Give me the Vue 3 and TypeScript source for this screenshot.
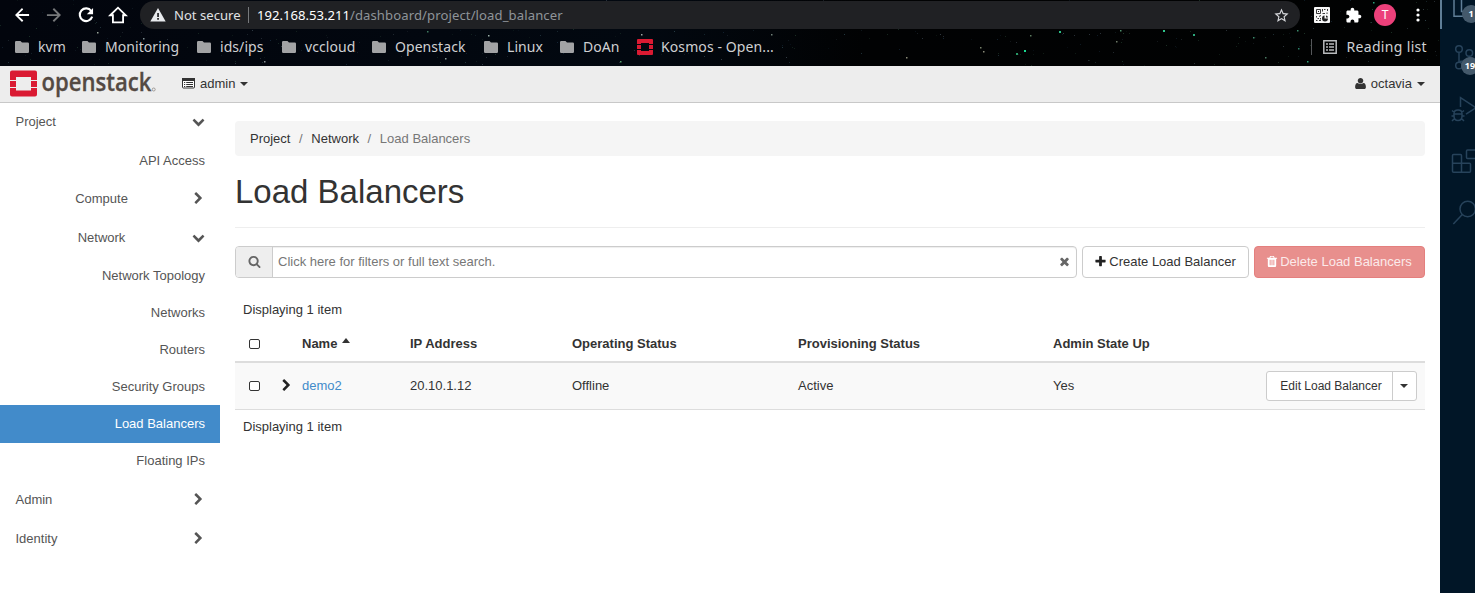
<script setup lang="ts">
interface NavItem { label: string; kind: 'top' | 'api' | 'group' | 'leaf'; open?: boolean; active?: boolean }

const bookmarks: string[] = ['kvm', 'Monitoring', 'ids/ips', 'vccloud', 'Openstack', 'Linux', 'DoAn']

const nav: NavItem[] = [
  { label: 'Project', kind: 'top', open: true },
  { label: 'API Access', kind: 'api' },
  { label: 'Compute', kind: 'group' },
  { label: 'Network', kind: 'group', open: true },
  { label: 'Network Topology', kind: 'leaf' },
  { label: 'Networks', kind: 'leaf' },
  { label: 'Routers', kind: 'leaf' },
  { label: 'Security Groups', kind: 'leaf' },
  { label: 'Load Balancers', kind: 'leaf', active: true },
  { label: 'Floating IPs', kind: 'leaf' },
  { label: 'Admin', kind: 'top' },
  { label: 'Identity', kind: 'top' },
]

const headers: string[] = ['IP Address', 'Operating Status', 'Provisioning Status', 'Admin State Up']
const cells: string[] = ['20.10.1.12', 'Offline', 'Active', 'Yes']

const chevronDown = 'M1683 808l-742 741q-19 19-45 19t-45-19l-742-741q-19-19-19-45.500t19-45.500l166-165q19-19 45-19t45 19l531 531 531-531q19-19 45-19t45 19l166 165q19 19 19 45.500t-19 45.500z'
const chevronRight = 'M1363 877l-742 742q-19 19-45 19t-45-19l-166-166q-19-19-19-45t19-45l531-531-531-531q-19-19-19-45t19-45l166-166q19-19 45-19t45 19l742 742q19 19 19 45t-19 45z'

// Starfield: a fixed pseudo-random scatter plus a few bright stars.
const tints: string[] = ['#34505a', '#2b4a38', '#46525c', '#1d3346', '#203a2c']
let seed = 41
const rand = (): number => {
  seed = (seed * 16807) % 2147483647
  return seed / 2147483647
}
const dust = Array.from({ length: 420 }, () => ({
  x: Math.floor(rand() * 1440),
  y: Math.floor(rand() * 66),
  c: tints[Math.floor(rand() * tints.length)],
  o: 0.2 + rand() * 0.5,
}))
const stars: [number, number, string][] = [
  [1024, 50, '#18d890'], [1059, 31, '#2bbf86'], [1016, 53, '#2a9a68'], [1163, 30, '#2fc48b'], [1193, 34, '#2ca77c'],
  [1120, 30, '#4e8f6c'], [1030, 35, '#5c7a60'], [980, 47, '#77806a'], [983, 51, '#8a8a78'], [906, 57, '#8a8a78'],
  [1116, 41, '#6e7a68'], [641, 34, '#9aa8a4'], [488, 35, '#9ab0a8'], [445, 58, '#8a9c98'], [620, 61, '#59a06c'],
  [97, 32, '#98a498'], [143, 38, '#7c8c90'], [264, 61, '#8b9496'], [427, 31, '#3f7a60'], [771, 34, '#708078'],
  [1298, 48, '#2b8069'], [1307, 61, '#2ba079'], [1373, 2, '#2ba079'], [1297, 30, '#3b8a6b'], [1253, 37, '#3b8a6b'], [1265, 57, '#4a7a62'],
]
</script>

<template>
  <div class="screen">
    <div class="browser">
      <div class="chrome">
        <svg class="sky" width="1440" height="66" viewBox="0 0 1440 66">
          <defs>
            <linearGradient id="night" x1="0" x2="1" y1="0" y2="0">
              <stop offset="0" stop-color="#02050d" /><stop offset=".45" stop-color="#020810" />
              <stop offset=".6" stop-color="#010203" /><stop offset="1" stop-color="#010202" />
            </linearGradient>
          </defs>
          <rect width="1440" height="66" fill="url(#night)" />
          <rect v-for="(d, i) in dust" :key="i" :x="d.x" :y="d.y" width="1" height="1" :fill="d.c" :opacity="d.o" />
          <rect v-for="(s, i) in stars" :key="'s' + i" :x="s[0]" :y="s[1]" :width="i < 5 ? 2 : 1.500" :height="i < 5 ? 2 : 1.500" :fill="s[2]" />
        </svg>
        <div class="toolbar">
          <svg class="tb-back" width="20" height="20" viewBox="0 0 24 24" fill="#fff"><path d="M20.500 10.800H7.830l5.590-5.390L12 3.600 3.600 12l8.400 8.400 1.600-1.800L7.830 13.200H20.500z" /></svg>
          <svg class="tb-fwd" width="20" height="20" viewBox="0 0 24 24" fill="#77797b"><path d="M12 3.600l-1.600 1.800L16.170 11H3.500v2.200h12.670l-5.770 5.400L12 20.400l8.400-8.400z" /></svg>
          <svg class="tb-reload" width="20" height="20" viewBox="0 0 24 24" fill="none" stroke="#fff" stroke-width="2.500"><path d="M18.300 7.200A7.600 7.600 0 1 0 19.400 14" /><path d="M20.500 3.500v7.500H13z" fill="#fff" stroke="none" /></svg>
          <svg class="tb-home" width="20" height="20" viewBox="0 0 24 24" fill="none" stroke="#fff" stroke-width="2.200"><path d="M2.700 12.300L12 3.200l9.300 9.100h-3.200v8.500H5.900v-8.500z" /></svg>
          <div class="omnibox">
            <svg width="16" height="14" viewBox="0 0 16 14"><path d="M8 0l7.700 13.500H.3z" fill="#e8eaed" /><path d="M7.200 5h1.700v4H7.200zM7.200 10h1.700v1.700H7.200z" fill="#202124" /></svg>
            <span class="insecure">Not secure</span>
            <i class="sep"></i>
            <span class="url"><b>192.168.53.211</b>/dashboard/project/load_balancer</span>
            <svg class="star" width="17" height="17" viewBox="0 0 24 24" fill="#d5d7da"><path d="M22 9.240l-7.190-.620L12 2 9.190 8.630 2 9.240l5.460 4.730L5.820 21 12 17.270 18.180 21l-1.630-7.030L22 9.240zM12 15.400l-3.760 2.270 1-4.280-3.320-2.880 4.380-.380L12 6.100l1.710 4.040 4.380.380-3.320 2.880 1 4.280L12 15.400z" /></svg>
          </div>
          <svg class="qr" width="16" height="16" viewBox="0 0 16 16">
            <rect width="16" height="16" rx="1" fill="#f8f8f8" />
            <g fill="none" stroke="#222" stroke-width=".9"><path d="M2.500 2.500h4v4h-4zM8.500 2v2.500M10 2.500h1.500M13.500 2v2M8.500 6.500H11M13 5.500v1.500M2.500 9v1.500M5 9.500l2-1M2 13.500h1.500M5 13.500h2M6.500 11v1.500M3.500 11.500h1.500" /></g>
            <path d="M4 4h1v1H4zM10.500 8.500v3h3.500q0 3-3 3t-3-3 2.500-3zM12 8.500q1.800 0 2 2h-2z" fill="#222" />
          </svg>
          <svg class="ext" width="17" height="17" viewBox="0 0 24 24" fill="#fff"><path d="M20.500 11H19V7c0-1.100-.9-2-2-2h-4V3.500C13 2.120 11.880 1 10.500 1S8 2.120 8 3.500V5H4c-1.100 0-1.990.9-1.990 2v3.800H3.500c1.490 0 2.700 1.210 2.700 2.700s-1.210 2.700-2.700 2.700H2V20c0 1.100.9 2 2 2h3.800v-1.500c0-1.490 1.210-2.700 2.700-2.700 1.490 0 2.700 1.210 2.700 2.700V22H17c1.100 0 2-.9 2-2v-4h1.500c1.380 0 2.500-1.120 2.500-2.500S21.880 11 20.500 11z" /></svg>
          <span class="avatar">T</span>
          <svg class="more" width="4" height="14" viewBox="0 0 4 14" fill="#fff"><circle cx="2" cy="2" r="1.600" /><circle cx="2" cy="7" r="1.600" /><circle cx="2" cy="12" r="1.600" /></svg>
        </div>
        <div class="bookmarks">
          <div v-for="b in bookmarks" :key="b" class="bm">
            <svg width="14" height="12" viewBox="0 0 14 12" fill="#a2a3a5"><path d="M1.200 0h4.300l1.500 1.600h5.800Q14 1.600 14 2.800v8q0 1.200-1.200 1.200H1.200Q0 12 0 10.800V1.200Q0 0 1.200 0z" /></svg>
            <span>{{ b }}</span>
          </div>
          <div class="bm kosmos">
            <svg width="16" height="16" viewBox="0 0 16 16"><path fill="#da1a32" d="M1 0h14q1 0 1 1v4h-4V4H4v1H0V1q0-1 1-1zM0 6h4v4H0zM12 6h4v4h-4zM0 11h4v1h8v-1h4v4q0 1-1 1H1q-1 0-1-1z" /></svg>
            <span>Kosmos - Open...</span>
          </div>
          <div class="reading">
            <svg width="14" height="14" viewBox="0 0 14 14" fill="none" stroke="#b9bbbd" stroke-width="1.500"><path d="M.8.800h12.400v12.400H.8zM3 4h2M6 4h5M3 7h2M6 7h5M3 10h2M6 10h5" /></svg>
            <span>Reading list</span>
          </div>
        </div>
      </div>

      <header class="navbar">
        <svg class="logo" width="150" height="34" viewBox="0 -2 150 34">
          <path fill="#da1a32" d="M2 1.500h23q2 0 2 2V11h-6V8H6v3H0V3.500q0-2 2-2zM0 12h6v6H0zM21 12h6v6h-6zM0 19h6v2.500h15V19h6v6.500q0 2-2 2H2q-2 0-2-2z" />
          <text x="31.500" y="21.500" textLength="110" lengthAdjust="spacingAndGlyphs" class="wordmark">openstack</text>
          <circle cx="143.700" cy="20.500" r="1.500" fill="none" stroke="#99938f" stroke-width=".9" />
        </svg>
        <div class="switcher">
          <svg width="13" height="11" viewBox="0 0 13 11"><rect x=".5" y=".5" width="12" height="9.500" rx="1" fill="#fff" stroke="#333" /><path fill="#333" d="M0 0h13v3H0zM2 4h1.200v1H2zM4.200 4H11v1H4.200zM2 6h1.200v1H2zM4.200 6H11v1H4.200zM2 8h1.200v1H2zM4.200 8H11v1H4.200z" /></svg>
          <span>admin</span><i class="caret"></i>
        </div>
        <div class="user">
          <svg width="13" height="13" viewBox="0 0 1792 1792" fill="#333"><path d="M1636 1399q0 109-62.500 187t-150.500 78h-1054q-88 0-150.500-78t-62.500-187q0-85 8.500-160.500t31.500-152 58.500-131 94-89 164.500-34.500q151 128 383 128t383-128q106 0 164.500 34.500t94 89 58.500 131 31.500 152 8.500 160.500zm-356-887q0 159-112.500 271.500t-271.500 112.500-271.500-112.500-112.500-271.500 112.500-271.500 271.500-112.500 271.500 112.500 112.500 271.500z" /></svg>
          <span>octavia</span><i class="caret"></i>
        </div>
      </header>

      <div class="body">
        <nav class="sidebar">
          <div v-for="n in nav" :key="n.label" class="item" :class="[n.kind, { active: n.active, closed: n.kind === 'top' && !n.open }]">
            <span>{{ n.label }}</span>
            <svg v-if="n.kind === 'top' || n.kind === 'group'" width="13" height="13" viewBox="0 0 1792 1792" fill="#555"><path :d="n.open ? chevronDown : chevronRight" /></svg>
          </div>
        </nav>

        <main class="content">
          <div class="crumbs"><span>Project</span><i>/</i><span>Network</span><i>/</i><em>Load Balancers</em></div>
          <h1>Load Balancers</h1>
          <div class="actions">
            <div class="search">
              <div class="addon"><svg width="13" height="13" viewBox="0 0 1792 1792" fill="#666"><path d="M1216 832q0-185-131.500-316.500t-316.500-131.500-316.500 131.500-131.500 316.500 131.500 316.500 316.500 131.500 316.500-131.500 131.500-316.500zm512 832q0 52-38 90t-90 38q-54 0-90-38l-343-342q-179 124-399 124-143 0-273.500-55.500t-225-150-150-225-55.500-273.500 55.500-273.500 150-225 225-150 273.500-55.500 273.500 55.500 225 150 150 225 55.500 273.500q0 220-124 399l343 343q37 37 37 90z" /></svg></div>
              <span class="hint">Click here for filters or full text search.</span>
              <svg class="clear" width="13" height="13" viewBox="0 0 1792 1792" fill="#666"><path d="M1490 1322q0 40-28 68l-136 136q-28 28-68 28t-68-28l-294-294-294 294q-28 28-68 28t-68-28l-136-136q-28-28-28-68t28-68l294-294-294-294q-28-28-28-68t28-68l136-136q28-28 68-28t68 28l294 294 294-294q28-28 68-28t68 28l136 136q28 28 28 68t-28 68l-294 294 294 294q28 28 28 68z" /></svg>
            </div>
            <button class="btn create"><svg width="13" height="13" viewBox="0 0 1792 1792" fill="#222"><path d="M1600 736v192q0 40-28 68t-68 28h-416v416q0 40-28 68t-68 28h-192q-40 0-68-28t-28-68v-416h-416q-40 0-68-28t-28-68v-192q0-40 28-68t68-28h416v-416q0-40 28-68t68-28h192q40 0 68 28t28 68v416h416q40 0 68 28t28 68z" /></svg><span>Create Load Balancer</span></button>
            <button class="btn delete"><svg width="12" height="13" viewBox="128 0 1536 1792" fill="#fff"><path d="M704 1376v-704q0-14-9-23t-23-9h-64q-14 0-23 9t-9 23v704q0 14 9 23t23 9h64q14 0 23-9t9-23zm256 0v-704q0-14-9-23t-23-9h-64q-14 0-23 9t-9 23v704q0 14 9 23t23 9h64q14 0 23-9t9-23zm256 0v-704q0-14-9-23t-23-9h-64q-14 0-23 9t-9 23v704q0 14 9 23t23 9h64q14 0 23-9t9-23zm-544-992h448l-48-117q-7-9-17-11h-317q-10 2-17 11zm928 32v64q0 14-9 23t-23 9h-96v948q0 83-47 143.500t-113 60.500h-832q-66 0-113-58.500t-47-141.500v-952h-96q-14 0-23-9t-9-23v-64q0-14 9-23t23-9h309l70-167q15-37 54-63t79-26h320q40 0 79 26t54 63l70 167h309q14 0 23 9t9 23z" /></svg><span>Delete Load Balancers</span></button>
          </div>
          <div class="count">Displaying 1 item</div>
          <div class="row head">
            <i class="check"></i><span></span>
            <span class="name">Name <i class="caret up"></i></span>
            <span v-for="h in headers" :key="h">{{ h }}</span>
          </div>
          <div class="row data">
            <i class="check"></i>
            <svg class="expand" width="13" height="13" viewBox="0 0 1792 1792" fill="#222"><path :d="chevronRight" /></svg>
            <a>demo2</a>
            <span v-for="c in cells" :key="c">{{ c }}</span>
            <div class="split"><span>Edit Load Balancer</span><b><i class="caret"></i></b></div>
          </div>
          <div class="count foot">Displaying 1 item</div>
        </main>
      </div>
    </div>

    <aside class="editor">
      <svg width="35" height="240" viewBox="0 0 35 240" fill="none" stroke="#27435b" stroke-width="1.500">
        <rect width="2" height="29" fill="#5f7e97" stroke="none" />
        <path d="M14 0v16.300h16M21.500 0v11.500H35" stroke="#5f7e97" />
        <circle cx="19" cy="49" r="3.300" /><circle cx="29.300" cy="53" r="3.300" /><circle cx="19" cy="65.500" r="3.300" />
        <path d="M19 52.500v9.500M29.300 56.500q0 4.500-9.500 5" />
        <path d="M20.500 107V97.700L36 107.700l-10 6.500" />
        <path d="M14 113.500q0-3.500 4-3.500t4 3.500v2.500q0 4.500-4 4.500t-4-4.500zM14 114h8M12 110.500l2.500 2M24 110.500l-2.500 2M11.500 116H14M22 116h2.500M12 121l2.500-2.500M24 121l-2.500-2.500" />
        <path d="M13.500 154.500h7q1 0 1 1v7.800h8q1 0 1 1v7q0 1-1 1h-16q-1 0-1-1v-15.800q0-1 1-1zM12.500 163.300h9v9M36 150h-8.500q-1 0-1 1v6.500q0 1 1 1H36" />
        <circle cx="27.700" cy="209" r="7.700" /><path d="M22.300 214.500l-9 9.500" />
      </svg>
      <span class="badge one">1</span>
      <span class="badge nineteen">19</span>
    </aside>
  </div>
</template>

<style>
body { margin: 0; overflow: hidden; }
</style>

<style scoped>
* { box-sizing: border-box; }
svg { display: block; flex: none; }
i, em { font-style: normal; }
.screen { display: flex; width: 1475px; height: 593px; background: #fff; font: 13px/18px "Liberation Sans", Arial, sans-serif; color: #333; overflow: hidden; }
.browser { width: 1440px; height: 593px; flex: none; }

.chrome { position: relative; height: 66px; background: #02050a; font-family: "Noto Sans", sans-serif; }
.sky { position: absolute; inset: 0; }
.toolbar { position: relative; display: flex; align-items: center; height: 30px; padding-left: 12px; }
.tb-fwd { margin-left: 12px; }
.tb-reload { margin-left: 12px; }
.tb-home { margin-left: 12px; }
.omnibox { display: flex; align-items: center; width: 1160px; height: 28px; margin: 0 0 0 12px; padding: 0 10px; border-radius: 14px; background: #202124; font-size: 13.100px; }
.insecure { width: 67px; margin-left: 8px; color: #e0e2e4; white-space: nowrap; }
.sep { width: 1px; height: 16px; margin: 0 8px 0 7px; background: #77797c; }
.url { color: #8f9499; white-space: nowrap; letter-spacing: .1px; }
.url b { color: #fff; font-weight: 400; letter-spacing: 0; }
.star { margin-left: auto; }
.qr { margin-left: 14px; }
.ext { margin-left: 15px; }
.avatar { width: 22px; height: 22px; margin-left: 12px; border-radius: 50%; background: #ec407a; color: #fff; text-align: center; font: 12px/22px Roboto, sans-serif; }
.more { margin-left: 20px; }
.bookmarks { position: relative; display: grid; grid-template-columns: 67px 115px 85px 90px 112px 76px 77px 1fr auto; align-items: center; height: 34px; padding: 0 13px 0 15px; color: #cfd0d2; font-size: 14px; letter-spacing: .06px; white-space: nowrap; }
.bm { display: flex; align-items: center; gap: 9px; }
.kosmos { gap: 8px; letter-spacing: .1px; }
.reading { display: flex; align-items: center; height: 16px; padding-left: 11px; gap: 9px; border-left: 1px solid #55575a; letter-spacing: .33px; }

.navbar { display: flex; align-items: center; height: 37px; padding: 0 15px 0 10px; background: #ededed; border-bottom: 1px solid #c8c8c8; }
.logo { overflow: visible; }
.wordmark { font: 600 25px "Open Sans", sans-serif; fill: #544a43; stroke: #544a43; stroke-width: .3px; }
.switcher { display: flex; align-items: center; margin-left: 22px; }
.switcher svg { margin-top: -1px; }
.switcher span { margin-left: 5px; }
.user { display: flex; align-items: center; margin-left: auto; }
.user svg { margin-top: -2px; }
.user span { margin-left: 4px; }
.caret { display: inline-block; width: 0; height: 0; border: 4px solid transparent; border-top-color: currentColor; border-bottom: 0; margin-left: 5px; }
.caret.up { border-top: 0; border-bottom: 5px solid #333; margin-left: 1px; vertical-align: 5px; }

.body { display: flex; height: 490px; }
.sidebar { width: 220px; flex: none; color: #555; }
.item { display: flex; align-items: center; justify-content: space-between; height: 38.500px; padding: 0 15px; }
.top { padding-left: 15.500px; }
.closed { margin-bottom: .5px; }
.leaf + .closed { margin-top: 2px; }
.api, .leaf { justify-content: flex-end; }
.leaf { height: 37px; }
.group span { width: 173px; text-align: center; }
.item svg { margin-top: -1px; }
.active { height: 38px; margin-bottom: -1px; background: #428bca; color: #fff; }

.content { flex: 1; padding: 18px 15px 0; }
.crumbs { display: flex; height: 35px; padding: 0 15px; align-items: center; background: #f5f5f5; border-radius: 4px; }
.crumbs i { width: 20.850px; text-align: center; color: #777; }
.crumbs em { color: #777; }
h1 { height: 72px; margin: 0; padding-top: 17px; border-bottom: 1px solid #eee; font-size: 33px; line-height: 38px; font-weight: 400; }
.actions { display: flex; height: 32px; margin-top: 18px; gap: 5px; }
.search { display: flex; flex: 1; align-items: center; border: 1px solid #ccc; border-radius: 4px; padding-right: 5px; box-shadow: inset 0 1px 1px rgba(0, 0, 0, .07); overflow: hidden; }
.addon { display: flex; width: 37px; height: 30px; align-items: center; justify-content: center; background: #eee; border-right: 1px solid #ccc; }
.addon svg, .clear, .btn svg { margin-top: -2px; }
.hint { flex: 1; margin-left: 5px; color: #777; }
.btn { display: flex; align-items: center; justify-content: center; gap: 2px; margin: 0; padding: 0 1px 0 0; border: 1px solid #ccc; border-radius: 4px; background: #fff; color: #333; font: inherit; white-space: nowrap; }
.create { width: 167px; }
.delete { width: 171px; border-color: #e47f7e; background: #e88f8d; color: #fbeaea; }
.count { padding: 23px 8px 0; }
.row { display: grid; grid-template-columns: 47px 20px 108px 162px 226px 255px 1fr; align-items: center; }
.head { height: 44px; padding-top: 7px; border-bottom: 2px solid #ddd; font-weight: 700; }
.data { height: 47px; grid-template-columns: 47px 20px 108px 162px 226px 255px 1fr auto; background: #f9f9f9; border-bottom: 1px solid #ddd; padding-right: 8px; }
.check { width: 11px; height: 10px; margin-left: 14px; border: 1px solid #333; border-radius: 2px; background: #fff; }
.expand { margin: -2px 0 0 -2px; }
.data a { color: #428bca; }
.split { display: flex; width: 151px; height: 30px; border: 1px solid #ccc; border-radius: 3px; background: #fff; font-size: 12px; line-height: 28px; white-space: nowrap; }
.split span { width: 126px; padding-left: 3px; text-align: center; border-right: 1px solid #ccc; }
.split b { display: flex; flex: 1; align-items: center; justify-content: center; }
.split .caret { margin: 0 1px 0 0; }
.foot { padding-top: 8px; }

.editor { position: relative; width: 35px; height: 593px; flex: none; overflow: hidden; background: #011627; }
.badge { position: absolute; width: 18px; height: 18px; border-radius: 9px; background: #44596b; color: #fff; text-align: center; font: 700 9px/18px "Open Sans", sans-serif; }
.one { left: 22px; top: 5px; }
.nineteen { left: 21px; top: 57px; }
</style>
